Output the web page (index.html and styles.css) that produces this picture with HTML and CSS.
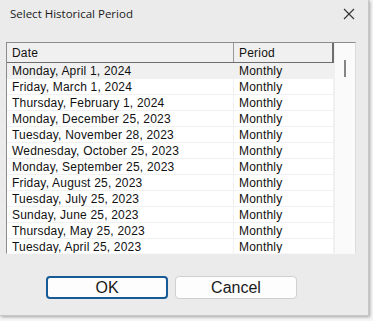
FILE: index.html
```html
<!DOCTYPE html>
<html>
<head>
<meta charset="utf-8">
<link rel="stylesheet" href="styles.css">
</head>
<body>
<div class="dialog">
  <div class="titlebar">
    <span class="title">Select Historical Period</span>
    <svg class="close" width="12" height="12" viewBox="0 0 12 12"><path d="M1 1L11 11M11 1L1 11" stroke="#333" stroke-width="1.1" fill="none"/></svg>
  </div>
  <div class="listbox">
    <div class="table">
      <div class="head">
        <div class="hcell c-date">Date</div>
        <div class="hcell c-period">Period</div>
      </div>
      <div class="rows">
        <div class="row sel"><div class="cell c-date">Monday, April 1, 2024</div><div class="cell c-period">Monthly</div></div>
        <div class="row"><div class="cell c-date">Friday, March 1, 2024</div><div class="cell c-period">Monthly</div></div>
        <div class="row"><div class="cell c-date">Thursday, February 1, 2024</div><div class="cell c-period">Monthly</div></div>
        <div class="row"><div class="cell c-date">Monday, December 25, 2023</div><div class="cell c-period">Monthly</div></div>
        <div class="row"><div class="cell c-date">Tuesday, November 28, 2023</div><div class="cell c-period">Monthly</div></div>
        <div class="row"><div class="cell c-date">Wednesday, October 25, 2023</div><div class="cell c-period">Monthly</div></div>
        <div class="row"><div class="cell c-date">Monday, September 25, 2023</div><div class="cell c-period">Monthly</div></div>
        <div class="row"><div class="cell c-date">Friday, August 25, 2023</div><div class="cell c-period">Monthly</div></div>
        <div class="row"><div class="cell c-date">Tuesday, July 25, 2023</div><div class="cell c-period">Monthly</div></div>
        <div class="row"><div class="cell c-date">Sunday, June 25, 2023</div><div class="cell c-period">Monthly</div></div>
        <div class="row"><div class="cell c-date">Thursday, May 25, 2023</div><div class="cell c-period">Monthly</div></div>
        <div class="row"><div class="cell c-date">Tuesday, April 25, 2023</div><div class="cell c-period">Monthly</div></div>
      </div>
    </div>
    <div class="scrollbar"><div class="thumb"></div></div>
  </div>
  <div class="buttons">
    <button class="btn ok">OK</button>
    <button class="btn">Cancel</button>
  </div>
</div>
</body>
</html>
```
FILE: styles.css
```css
html, body {
  margin: 0;
  padding: 0;
  background: #f6f6f6;
}
body {
  width: 373px;
  height: 321px;
  overflow: hidden;
}
.dialog {
  width: 368px;
  height: 315px;
  background: #ebebeb;
  box-shadow: 1px 1px 3px rgba(0,0,0,0.35);
  border-right: 1px solid #c8c8c8;
  border-bottom: 1px solid #c8c8c8;
  display: flex;
  flex-direction: column;
  font-family: "Liberation Sans", Arial, sans-serif;
}
.titlebar {
  height: 27px;
  display: flex;
  align-items: center;
  justify-content: space-between;
  padding: 0 13px 0 10px;
}
.title {
  font-family: "Open Sans", "Noto Sans", sans-serif;
  font-size: 11.5px;
  color: #1a1a1a;
}
.close { display: block; }
.listbox {
  margin: 15px 0 0 6px;
  width: 350px;
  height: 212px;
  box-sizing: border-box;
  border-top: 1px solid #8c8c8c;
  border-left: 1px solid #8c8c8c;
  border-right: 1px solid #dcdcdc;
  border-bottom: 1px solid #f8f8f8;
  background: #fff;
  display: flex;
  overflow: hidden;
}
.table {
  width: 327px;
  display: flex;
  flex-direction: column;
}
.head {
  display: flex;
  height: 20px;
  background: #f0f0f0;
  border-bottom: 1px solid #6e6e6e;
  border-right: 2px solid #6e6e6e;
  box-sizing: border-box;
}
.hcell {
  font-size: 12px;
  letter-spacing: 0.2px;
  color: #111;
  line-height: 20px;
  padding-left: 5px;
  box-sizing: border-box;
}
.head .c-date { border-right: 1px solid #9a9a9a; }
.c-date { width: 227px; }
.c-period { flex: 1; }
.rows { display: flex; flex-direction: column; }
.row {
  display: flex;
  height: 16px;
  box-sizing: border-box;
  border-bottom: 1px solid #f0f0f0;
  border-right: 1px solid #f0f0f0;
}
.row.sel { background: #f0f0f0; }
.cell {
  font-size: 12px;
  letter-spacing: 0.2px;
  color: #111;
  line-height: 17px;
  padding-left: 5px;
  box-sizing: border-box;
  white-space: nowrap;
}
.row .c-date { border-right: 1px solid #f0f0f0; }
.scrollbar {
  flex: 1;
  background: #fafafa;
  border-left: 1px solid #f0f0f0;
  position: relative;
}
.thumb {
  position: absolute;
  left: 9px;
  top: 17px;
  width: 2px;
  height: 17px;
  background: #858585;
}
.buttons {
  display: flex;
  gap: 7px;
  margin: 22px 0 0 46px;
}
.btn {
  width: 122px;
  height: 23px;
  box-sizing: border-box;
  background: #fdfdfd;
  border: 1px solid #d0d0d0;
  border-radius: 4px;
  font-family: "Liberation Sans", Arial, sans-serif;
  font-size: 16px;
  color: #1a1a1a;
  padding: 0;
  line-height: 20px;
}
.btn.ok {
  border: 2px solid #175a96;
  line-height: 18px;
}
```
